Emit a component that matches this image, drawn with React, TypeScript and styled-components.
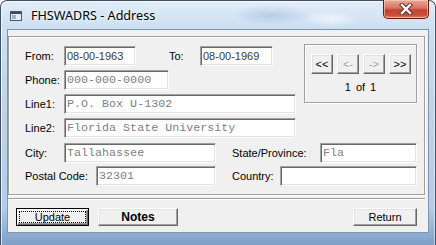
import React from 'react';
import styled, { createGlobalStyle } from 'styled-components';

const Global = createGlobalStyle`
  html, body { margin: 0; padding: 0; background: #ffffff; }
  body { width: 436px; height: 245px; overflow: hidden; }
  * { box-sizing: border-box; }
`;

const Window = styled.div`
  width: 436px;
  height: 245px;
  display: flex;
  flex-direction: column;
  border: 1px solid #3e4f66;
  border-bottom: none;
  border-radius: 7px 7px 0 0;
  padding: 0 6px 12px 6px;
  background:
    radial-gradient(ellipse 40px 10px at 270px 14px, rgba(120,150,190,0.3), transparent),
    radial-gradient(ellipse 30px 8px at 330px 18px, rgba(255,255,255,0.6), transparent),
    linear-gradient(180deg, #e2edf8 0%, #cde0f2 10%, #bfd5ec 40%, #b3cbe6 85%, #7f9fc6 100%);
  box-shadow: inset 1px 1px 0 rgba(255,255,255,0.7), inset -1px 0 0 rgba(255,255,255,0.5);
`;

const TitleBar = styled.div`
  height: 28px;
  display: flex;
  align-items: flex-start;
`;

const TitleGroup = styled.div`
  flex: 1;
  display: flex;
  align-items: center;
  gap: 9px;
  padding: 7px 0 0 3px;
`;

const TitleText = styled.span`
  font-family: "Noto Sans", "Open Sans", sans-serif;
  font-size: 12.6px;
  line-height: 16px;
  color: #000;
  text-shadow: 0 0 6px rgba(255,255,255,0.9), 0 0 3px rgba(255,255,255,0.9);
`;

const CloseButton = styled.div`
  width: 46px;
  height: 19px;
  margin-top: -1px;
  border: 1px solid #5a2018;
  border-top: none;
  border-radius: 0 0 5px 5px;
  background: linear-gradient(180deg, #e9a99a 0%, #d9735f 45%, #c2432c 55%, #c9503a 85%, #e08b6e 100%);
  box-shadow: inset 0 0 0 1px rgba(255,210,200,0.6);
  display: flex;
  align-items: center;
  justify-content: center;
`;

const Client = styled.div`
  flex: 1;
  display: flex;
  flex-direction: column;
  background: #f0f0f0;
  border: 1px solid #7f93ab;
`;

const GroupBox = styled.div`
  width: 417px;
  margin-top: 6px;
  border: 1px solid #a0a0a0;
  box-shadow: inset 1px 1px 0 #ffffff, 1px 1px 0 #ffffff;
  padding: 9px 7px 8px 16px;
  display: flex;
  flex-direction: column;
`;

const TopSection = styled.div`
  display: flex;
  align-items: flex-start;
  justify-content: space-between;
`;

const FieldColumn = styled.div`
  display: flex;
  flex-direction: column;
  gap: 4px;
`;

const Row = styled.div<{ $mt?: number }>`
  display: flex;
  align-items: center;
  height: 20px;
  margin-top: ${p => p.$mt ?? 0}px;
`;

const Label = styled.span<{ $w: number; $ml?: number }>`
  width: ${p => p.$w}px;
  margin-left: ${p => p.$ml ?? 0}px;
  font-family: "Liberation Sans", Arial, sans-serif;
  font-size: 11px;
  color: #000;
  white-space: nowrap;
`;

const TextBox = styled.input<{ $w: number; $mono?: boolean }>`
  width: ${p => p.$w}px;
  height: 20px;
  margin: 0;
  padding: 0 0 0 2px;
  border: 1px solid;
  border-color: #a0a0a0 #ffffff #ffffff #a0a0a0;
  box-shadow: inset 1px 1px 0 #696969, inset -1px -1px 0 #e3e3e3;
  background: #ffffff;
  outline: none;
  font-family: ${p => (p.$mono ? '"Liberation Mono", "Courier New", monospace' : '"Liberation Sans", Arial, sans-serif')};
  font-size: ${p => (p.$mono ? '11.7px' : '11px')};
  color: ${p => (p.$mono ? '#808080' : '#383838')};
`;

const NavFrame = styled.div`
  width: 113px;
  height: 59px;
  margin-top: -2px;
  border: 1px solid #a0a0a0;
  box-shadow: inset 1px 1px 0 #ffffff, 1px 1px 0 #ffffff;
  padding: 9px 0 0 6px;
  display: flex;
  flex-direction: column;
  gap: 7px;
`;

const NavButtons = styled.div`
  display: flex;
  gap: 4px;
`;

const RaisedButton = styled.button<{ $w: number; $h: number; $disabled?: boolean; $bold?: boolean }>`
  width: ${p => p.$w}px;
  height: ${p => p.$h}px;
  margin: 0;
  padding: 0;
  background: #f0f0f0;
  border: 1px solid;
  border-color: #ffffff #696969 #696969 #ffffff;
  box-shadow: inset -1px -1px 0 #a0a0a0, inset 1px 1px 0 #e3e3e3;
  font-family: "Liberation Sans", Arial, sans-serif;
  font-size: ${p => (p.$bold ? '12px' : '11px')};
  font-weight: ${p => (p.$bold ? 700 : 400)};
  color: ${p => (p.$disabled ? '#a0a0a0' : '#000')};
  text-shadow: ${p => (p.$disabled ? '1px 1px 0 #fff' : 'none')};
  display: flex;
  align-items: center;
  justify-content: center;
  line-height: 1;
`;

const DefaultButton = styled.button<{ $w: number; $h: number }>`
  width: ${p => p.$w}px;
  height: ${p => p.$h}px;
  margin: 0;
  padding: 2px;
  background: #f0f0f0;
  border: 1px solid #000;
  box-shadow: inset 1px 1px 0 #ffffff, inset -1px -1px 0 #696969, inset -2px -2px 0 #a0a0a0;
  font-family: "Liberation Sans", Arial, sans-serif;
  font-size: 11px;
  color: #000;
  display: flex;
  align-items: stretch;
`;

const FocusRect = styled.span`
  flex: 1;
  border: 1px dotted #000;
  display: flex;
  align-items: center;
  justify-content: center;
`;

const PageInfo = styled.div`
  display: flex;
  justify-content: center;
  gap: 5px;
  padding-right: 6px;
  font-family: "Liberation Sans", Arial, sans-serif;
  font-size: 11px;
  line-height: 13px;
  color: #000;
`;

const Separator = styled.div`
  width: 417px;
  height: 2px;
  margin-top: 3px;
  border-top: 1px solid #a0a0a0;
  border-bottom: 1px solid #ffffff;
`;

const ButtonBar = styled.div`
  display: flex;
  align-items: center;
  gap: 9px;
  padding: 8px 11px 0 8px;
`;

const Spacer = styled.div`
  flex: 1;
`;

const AppIcon = () => (
  <svg width="12" height="10" viewBox="0 0 12 10">
    <rect x="0.5" y="0.5" width="11" height="9" fill="#e8edf2" stroke="#4a5866" />
    <rect x="1" y="1" width="10" height="2" fill="#3d4c5c" />
    <rect x="2" y="4" width="4" height="4" fill="#9fb3c8" />
  </svg>
);

const CloseGlyph = () => (
  <svg width="14" height="12" viewBox="0 0 14 12">
    <path d="M3 2 L11 10 M11 2 L3 10" stroke="#5a2a22" strokeWidth="4.2" strokeLinecap="square" />
    <path d="M3 2 L11 10 M11 2 L3 10" stroke="#ffffff" strokeWidth="2.4" strokeLinecap="square" />
  </svg>
);

export default function App() {
  return (
    <>
      <Global />
      <Window>
        <TitleBar>
          <TitleGroup>
            <AppIcon />
            <TitleText>FHSWADRS - Address</TitleText>
          </TitleGroup>
          <CloseButton>
            <CloseGlyph />
          </CloseButton>
        </TitleBar>
        <Client>
          <GroupBox>
            <TopSection>
              <FieldColumn>
                <Row>
                  <Label $w={39}>From:</Label>
                  <TextBox $w={72} readOnly value="08-00-1963" />
                  <Label $w={31} $ml={33}>To:</Label>
                  <TextBox $w={73} readOnly value="08-00-1969" />
                </Row>
                <Row>
                  <Label $w={39}>Phone:</Label>
                  <TextBox $w={105} $mono readOnly value="000-000-0000" />
                </Row>
                <Row>
                  <Label $w={39}>Line1:</Label>
                  <TextBox $w={232} $mono readOnly value="P.O. Box U-1302" />
                </Row>
                <Row>
                  <Label $w={39}>Line2:</Label>
                  <TextBox $w={232} $mono readOnly value="Florida State University" />
                </Row>
              </FieldColumn>
              <NavFrame>
                <NavButtons>
                  <RaisedButton $w={22} $h={20}>&lt;&lt;</RaisedButton>
                  <RaisedButton $w={22} $h={20} $disabled>&lt;-</RaisedButton>
                  <RaisedButton $w={22} $h={20} $disabled>-&gt;</RaisedButton>
                  <RaisedButton $w={22} $h={20}>&gt;&gt;</RaisedButton>
                </NavButtons>
                <PageInfo>
                  <span>1</span>
                  <span>of</span>
                  <span>1</span>
                </PageInfo>
              </NavFrame>
            </TopSection>
            <Row $mt={5}>
              <Label $w={39}>City:</Label>
              <TextBox $w={152} $mono readOnly value="Tallahassee" />
              <Label $w={88} $ml={16}>State/Province:</Label>
              <TextBox $w={97} $mono readOnly value="Fla" />
            </Row>
            <Row $mt={3}>
              <Label $w={71}>Postal Code:</Label>
              <TextBox $w={120} $mono readOnly value="32301" />
              <Label $w={48} $ml={16}>Country:</Label>
              <TextBox $w={137} $mono readOnly value="" />
            </Row>
          </GroupBox>
          <Separator />
          <ButtonBar>
            <DefaultButton $w={73} $h={18}>
              <FocusRect>Update</FocusRect>
            </DefaultButton>
            <RaisedButton $w={80} $h={18} $bold>Notes</RaisedButton>
            <Spacer />
            <RaisedButton $w={64} $h={18}>Return</RaisedButton>
          </ButtonBar>
        </Client>
      </Window>
    </>
  );
}
